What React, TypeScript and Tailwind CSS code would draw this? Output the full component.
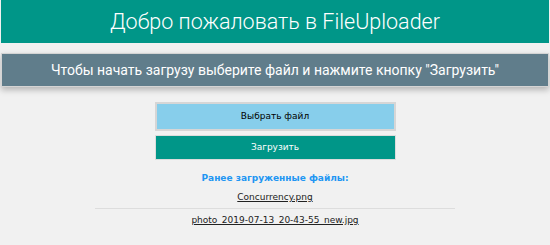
import React from "react";

const files = ["Concurrency.png", "photo_2019-07-13_20-43-55_new.jpg"];

const App = () => {
  return (
    <div className="min-h-[245px] bg-[#f1f1f1] font-['DejaVu_Sans',sans-serif]">
      <div className="px-px">
        <h1 className="h-[43px] bg-[#009688] text-center font-['Roboto',Arial,sans-serif] text-[21.5px] font-light leading-[43px] text-white">
          Добро пожаловать в FileUploader
        </h1>
      </div>
      <div className="px-px pt-[10px]">
        <div className="flex h-[34px] items-center justify-center border border-[#d4d4d4] bg-[#607d8b] font-['Roboto',Arial,sans-serif] text-[14px] text-white shadow-[0_3px_6px_rgba(0,0,0,0.25)]">
          Чтобы начать загрузу выберите файл и нажмите кнопку "Загрузить"
        </div>
      </div>
      <div className="mx-auto mt-[15px] flex w-[241px] flex-col gap-[4px]">
        <button className="h-[29px] border-2 border-[#d6d6d6] bg-[#87ceeb] text-[9px] text-black">
          Выбрать файл
        </button>
        <button className="h-[25px] border border-[#dcdcdc] bg-[#009688] text-[9px] text-white">
          Загрузить
        </button>
      </div>
      <div className="mt-[11px] text-center">
        <div className="text-[9px] font-bold leading-[14px] text-[#2196f3]">
          Ранее загруженные файлы:
        </div>
        <div className="mx-auto mt-px w-[360px]">
          {files.map((f, i) => (
            <div
              key={f}
              className={`py-[5px] text-[9px] leading-[12px] text-[#222] ${i > 0 ? "border-t border-[#dddddd]" : ""}`}
            >
              <a href="#" className="underline">
                {f}
              </a>
            </div>
          ))}
        </div>
      </div>
    </div>
  );
};

export default App;
